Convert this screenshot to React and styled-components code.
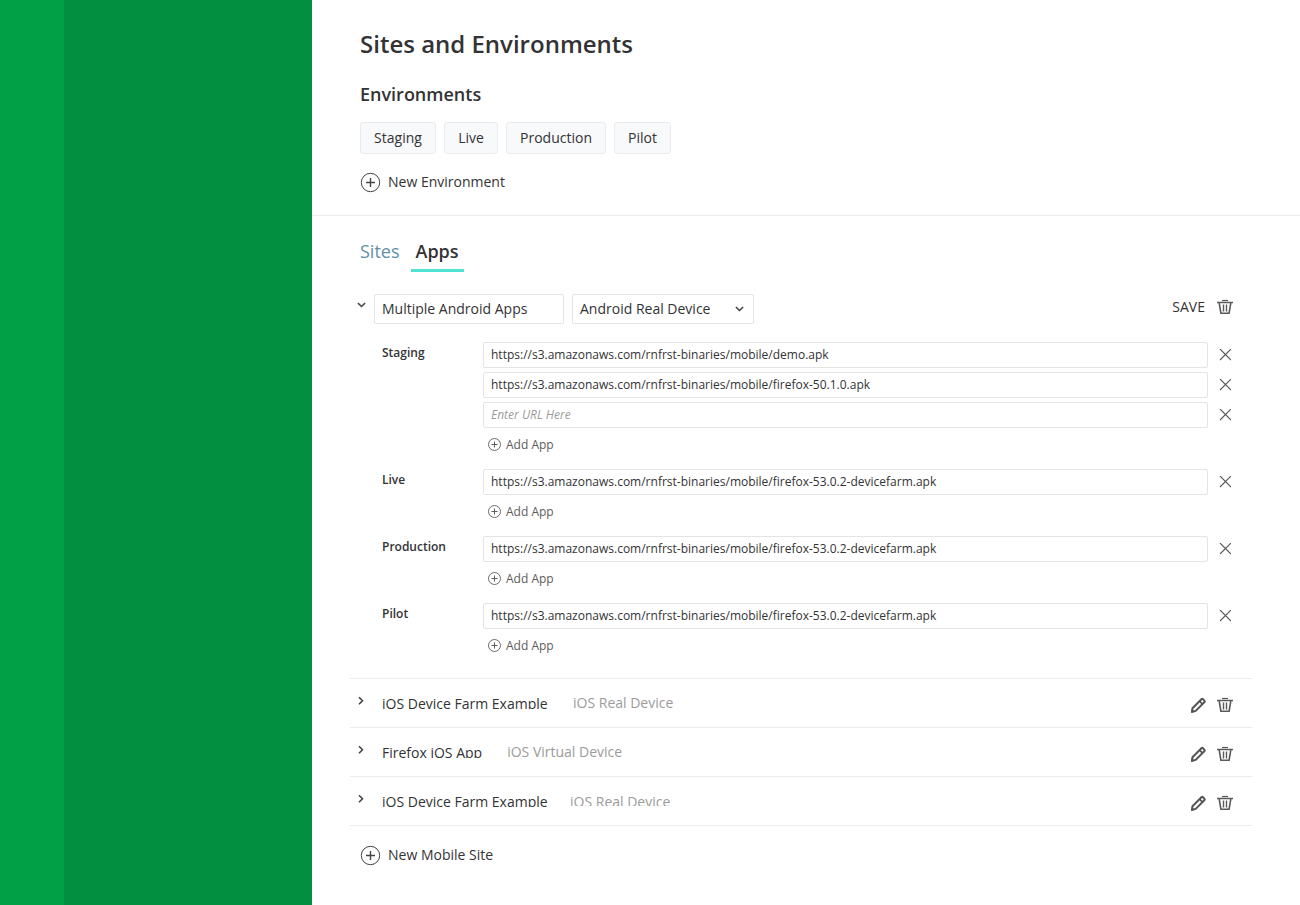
import React from "react";
import styled, { createGlobalStyle } from "styled-components";

const Global = createGlobalStyle`
  * { box-sizing: border-box; }
  body {
    margin: 0;
    background: #fff;
    color: #333335;
    font-family: "Open Sans", sans-serif;
    font-size: 14px;
    overflow: hidden;
  }
  button, input { font: inherit; color: inherit; }
  svg { display: block; flex: none; }
`;

const Page = styled.div`
  display: flex;
  width: 1300px;
  height: 905px;
`;

const Rail = styled.nav`
  flex: none;
  width: ${(p) => p.$width}px;
  background: ${(p) => p.$color};
`;

const Main = styled.main`
  flex: 1;
  min-width: 0;
`;

const Header = styled.header`
  height: 216px;
  padding: 28px 48px 0;
  border-bottom: 1px solid #ebebeb;
`;

const Title = styled.h1`
  margin: 0;
  font-size: 24px;
  line-height: 32px;
  font-weight: 600;
`;

const Subtitle = styled.h2`
  margin: 22px 0 16px;
  font-size: 18px;
  line-height: 24px;
  font-weight: 600;
`;

const Chips = styled.div`
  display: flex;
  gap: 8px;
`;

const Chip = styled.button`
  width: ${(p) => p.$width}px;
  height: 32px;
  padding: 0 0 2px;
  border: 1px solid #e9ebed;
  border-radius: 3px;
  background: #f8f9fb;
`;

const NewButton = styled.button`
  display: flex;
  align-items: center;
  gap: 7px;
  height: 22px;
  margin-top: ${(p) => p.$top}px;
  padding: 0;
  border: 0;
  background: none;
  line-height: 22px;
`;

const Tabs = styled.div`
  display: flex;
  gap: 6px;
  padding: 23px 0 0 43px;
`;

const Tab = styled.button`
  height: 33px;
  padding: 0 5px 6px;
  border: 0;
  border-bottom: 3px solid ${(p) => (p.$active ? "#50e3d0" : "transparent")};
  background: none;
  color: ${(p) => (p.$active ? "#333335" : "#5f8fa8")};
  font-size: 18px;
  line-height: 24px;
  font-weight: ${(p) => (p.$active ? 600 : 400)};
`;

const AppHeader = styled.div`
  display: flex;
  align-items: flex-start;
  margin: 22px 67px 0 44px;
`;

const Toggle = styled.button`
  width: 18px;
  height: 12px;
  margin-top: 5px;
  padding: 0;
  border: 0;
  background: none;
`;

const NameInput = styled.input`
  width: 190px;
  height: 30px;
  padding: 0 7px 2px;
  border: 1px solid #e4e4e4;
  border-radius: 2px;
  outline: 0;
`;

const Select = styled.button`
  display: flex;
  align-items: center;
  justify-content: space-between;
  width: 182px;
  height: 30px;
  margin-left: 8px;
  padding: 0 7px 1px;
  border: 1px solid #e4e4e4;
  border-radius: 2px;
  background: #fff;
  line-height: 19px;
`;

const Actions = styled.div`
  display: flex;
  align-items: center;
  gap: ${(p) => p.$gap}px;
  height: 26px;
  margin-left: auto;
`;

const SaveLabel = styled.span`
  line-height: 20px;
  padding-bottom: 1px;
`;

const Groups = styled.div`
  padding: 18px 0 8px 70px;
`;

const Group = styled.section`
  display: flex;
`;

const GroupName = styled.h3`
  width: 101px;
  margin: 2px 0 0;
  font-size: 12px;
  line-height: 17px;
  font-weight: 600;
`;

const Fields = styled.div`
  display: flex;
  flex-direction: column;
  gap: 4px;
`;

const Field = styled.div`
  display: flex;
  align-items: center;
  gap: 11px;
`;

const UrlInput = styled.input`
  width: 725px;
  height: 26px;
  padding: 0 7px 1px;
  border: 1px solid #e4e4e4;
  border-radius: 2px;
  outline: 0;
  font-size: 12px;
  &::placeholder { color: #9b9b9b; font-style: italic; opacity: 1; }
`;

const AddButton = styled.button`
  display: flex;
  align-items: center;
  gap: 4px;
  height: 25px;
  margin-bottom: 12px;
  padding: 0 0 0 5px;
  border: 0;
  background: none;
  color: #5c5c5c;
  font-size: 12px;
`;

const List = styled.div`
  margin: 0 48px 0 38px;
  border-top: 1px solid #ebebeb;
`;

const Row = styled.div`
  display: flex;
  align-items: flex-start;
  height: 49px;
  padding: 13px 19px 0 5px;
  border-bottom: 1px solid #ebebeb;
`;

const RowToggle = styled.button`
  width: 27px;
  height: 12px;
  margin-top: 3px;
  padding: 0;
  border: 0;
  background: none;
`;

const RowName = styled.span`
  height: 17px;
  margin-right: ${(p) => p.$gap}px;
  padding-top: 2px;
  line-height: 20px;
  overflow: hidden;
  white-space: nowrap;
`;

const RowType = styled.span`
  height: ${(p) => (p.$clipped ? 17 : 22)}px;
  margin-top: ${(p) => (p.$clipped ? -1 : 0)}px;
  padding-top: ${(p) => (p.$clipped ? 3 : 1)}px;
  color: #9b9b9b;
  line-height: 20px;
  overflow: hidden;
`;

const Footer = styled.footer`
  padding-left: 48px;
`;

const PlusCircle = ({ small }) =>
  small ? (
    <svg width="14" height="14" viewBox="0 0 14 14" fill="none" stroke="#5c5c5c">
      <circle cx="6.5" cy="6.5" r="6" strokeWidth=".9" />
      <path d="M3.5 6.5h6M6.5 3.5v6" />
    </svg>
  ) : (
    <svg width="21" height="22" viewBox="0 0 21 22" fill="none" stroke="#444">
      <circle cx="10.5" cy="11.5" r="9.2" />
      <path d="M6 11.5h9M10.5 7v9" strokeWidth="1.4" />
    </svg>
  );

const Chevron = ({ right }) => (
  <svg width="12" height="12" viewBox="0 0 12 12" fill="none" stroke="#444" strokeWidth="1.6">
    <path d={right ? "M4 2.3 7.5 5.8 4 9.3" : "M1.9 4 5.5 7.5 9.1 4"} />
  </svg>
);

const Trash = () => (
  <svg width="16" height="16" viewBox="0 0 16 16" fill="none" stroke="#5a5a5a">
    <path d="M5 1.5h6" strokeWidth="1.2" />
    <path d="M0 3.5h16" strokeWidth="1.5" />
    <path d="M2.2 4l1.7 10.2h8.2L13.8 4" strokeWidth="1.6" />
    <path d="M6.5 5.5v7M9.5 5.5v7" strokeWidth="1.4" />
  </svg>
);

const Pencil = () => (
  <svg width="16" height="16" viewBox="0 0 16 16" fill="none" stroke="#555" strokeWidth="2" strokeLinejoin="round">
    <path d="M2 14.9l.5-3.7L11.4 2.3q.8-.8 1.6 0l1.3 1.3q.8.8 0 1.6L5.7 13.9z" />
    <path d="M9.6 4.2l2.9 2.9" strokeWidth="1.7" />
    <path d="M1.5 15.4l.5-3 2.4 2.4z" fill="#555" strokeWidth=".5" />
  </svg>
);

const Cross = () => (
  <svg width="12" height="12" viewBox="0 0 12 12" fill="none" stroke="#555" strokeWidth="1.1">
    <path d="M1 0l11 11M12 0L1 11" />
  </svg>
);

const BASE = "https://s3.amazonaws.com/rnfrst-binaries/mobile/";
const FARM = BASE + "firefox-53.0.2-devicefarm.apk";

const chips = [["Staging", 76], ["Live", 54], ["Production", 100], ["Pilot", 57]];
const groups = [
  { name: "Staging", urls: [BASE + "demo.apk", BASE + "firefox-50.1.0.apk", ""] },
  { name: "Live", urls: [FARM] },
  { name: "Production", urls: [FARM] },
  { name: "Pilot", urls: [FARM] },
];
const rows = [
  { name: "iOS Device Farm Example", type: "iOS Real Device", gap: 25.4 },
  { name: "Firefox iOS App", type: "iOS Virtual Device", gap: 25 },
  { name: "iOS Device Farm Example", type: "iOS Real Device", gap: 22.4, clipped: true },
];

export default function App() {
  return (
    <Page>
      <Global />
      <Rail $width={64} $color="#02a046" />
      <Rail $width={248} $color="#029040" />
      <Main>
        <Header>
          <Title>Sites and Environments</Title>
          <Subtitle>Environments</Subtitle>
          <Chips>
            {chips.map(([name, width]) => (
              <Chip key={name} $width={width}>{name}</Chip>
            ))}
          </Chips>
          <NewButton $top={17}><PlusCircle />New Environment</NewButton>
        </Header>
        <Tabs>
          <Tab>Sites</Tab>
          <Tab $active>Apps</Tab>
        </Tabs>
        <AppHeader>
          <Toggle><Chevron /></Toggle>
          <NameInput defaultValue="Multiple Android Apps" />
          <Select>Android Real Device<Chevron /></Select>
          <Actions $gap={12}><SaveLabel>SAVE</SaveLabel><Trash /></Actions>
        </AppHeader>
        <Groups>
          {groups.map((g) => (
            <Group key={g.name}>
              <GroupName>{g.name}</GroupName>
              <Fields>
                {g.urls.map((url, i) => (
                  <Field key={i}>
                    <UrlInput defaultValue={url} placeholder="Enter URL Here" />
                    <Cross />
                  </Field>
                ))}
                <AddButton><PlusCircle small />Add App</AddButton>
              </Fields>
            </Group>
          ))}
        </Groups>
        <List>
          {rows.map((r, i) => (
            <Row key={i}>
              <RowToggle><Chevron right /></RowToggle>
              <RowName $gap={r.gap}>{r.name}</RowName>
              <RowType $clipped={r.clipped}>{r.type}</RowType>
              <Actions $gap={11}><Pencil /><Trash /></Actions>
            </Row>
          ))}
        </List>
        <Footer>
          <NewButton $top={18}><PlusCircle />New Mobile Site</NewButton>
        </Footer>
      </Main>
    </Page>
  );
}
